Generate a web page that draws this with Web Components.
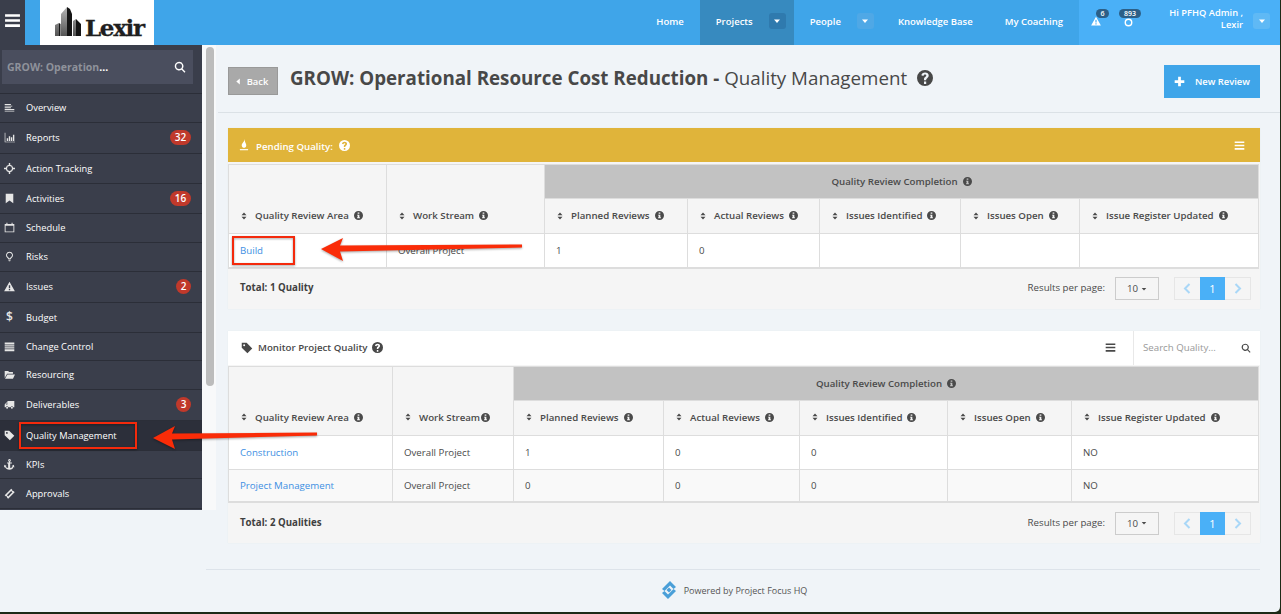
<!DOCTYPE html>
<html>
<head>
<meta charset="utf-8">
<title>Quality Management</title>
<style>
  html, body { margin: 0; height: 100%; overflow: hidden; background: #1d2a17; }
  body { font-family: "Open Sans", "Liberation Sans", sans-serif; font-size: 9.7px; color: #4a4a4a; }
</style>
</head>
<body>
<app-shell>
  <top-bar slot="top"></top-bar>
  <side-bar slot="side"></side-bar>
  <main-area slot="main">
    <page-head></page-head>
    <data-panel kind="pending" heading="Pending Quality:" icon="fire">
      <quality-table widths="158,158,143,132,141,119,179" heights="34,35,34"
        rows='[[{"href":"Build"},"Overall Project","1","0","","",""]]'></quality-table>
      <table-foot slot="foot" total="Total: 1 Quality"></table-foot>
    </data-panel>
    <data-panel kind="monitor" heading="Monitor Project Quality" icon="tag">
      <quality-table tight widths="164,121,150,136,148,124,187" heights="34,35,34,33"
        rows='[[{"href":"Construction"},"Overall Project","1","0","0","","NO"],[{"href":"Project Management"},"Overall Project","0","0","0","","NO"]]'></quality-table>
      <table-foot slot="foot" total="Total: 2 Qualities"></table-foot>
    </data-panel>
    <page-foot></page-foot>
  </main-area>
  <red-mark slot="over" box="19,422,118,27" tip="153,438" back="175,426,175,449" tail="317,434"></red-mark>
  <red-mark slot="over" box="232,236,63,29" tip="321,249" back="343,238,343,261" tail="522,246"></red-mark>
</app-shell>

<script>
const ICONS = {
  bars: '<path d="M1 2h14v2.400H1zM1 6.800h14v2.400H1zM1 11.600h14V14H1z"/>',
  overview: '<path d="M1 3h9v1.300H1zM1 5.400h11v1.300H1zM1 7.800h9v1.300H1zM1 10.200h14v1.300H1zM1 12.600h14v1.300H1z"/>',
  chart: '<path d="M1 1h1v13h14v1H1z"/><path d="M4 9h2v4H4zM7 6h2v7H7zM10 7.500h2V13h-2zM13 4h2v9h-2z"/>',
  target: '<path fill-rule="evenodd" d="M7 0h2v2.700A5.400 5.400 0 0 1 13.300 7H16v2h-2.700A5.400 5.400 0 0 1 9 13.300V16H7v-2.700A5.400 5.400 0 0 1 2.700 9H0V7h2.700A5.400 5.400 0 0 1 7 2.700zM8 4.400a3.600 3.600 0 1 0 0 7.200 3.600 3.600 0 0 0 0-7.200z"/>',
  bookmark: '<path d="M2.500 1h11v14L8 11l-5.500 4z"/>',
  calendar: '<path fill-rule="evenodd" d="M1 3h2.500V1h1.500v2h6V1h1.500v2H15v12H1zM2.300 5.500v8.200h11.400V5.500z"/>',
  bulb: '<path fill-rule="evenodd" d="M8 1a5 5 0 0 1 3 9c-.6.5-.9 1-1 1.700H6c-.1-.7-.4-1.200-1-1.700a5 5 0 0 1 3-9zm0 1.400a3.600 3.600 0 0 0-2.100 6.500c.6.500 1 1 1.200 1.500h1.800c.2-.5.600-1 1.200-1.500A3.600 3.600 0 0 0 8 2.400z"/><path d="M6.300 12.500h3.400v1.200H6.300zM7 14.200h2V15H7z"/>',
  warning: '<path fill-rule="evenodd" d="M8 1l7.800 14H.2zM7 6v4.500h2V6zm0 5.500v2h2v-2z"/>',
  list: '<path d="M1 2h14v3H1zM1 6h14v2H1zM1 9h14v2H1zM1 12h14v3H1z"/>',
  folder: '<path d="M1 3h5l1.500 1.500H13V7H4.500L1 13z"/><path d="M5 8h11l-3 6H1.500z"/>',
  truck: '<path fill-rule="evenodd" d="M5 3h10v9h-1.600a2 2 0 0 0-3.800 0H6.400a2 2 0 0 0-3.800 0H1V8l2.500-3H5zM2.500 8H5V6H4z"/><circle cx="4.500" cy="12.800" r="1.400"/><circle cx="11.500" cy="12.800" r="1.400"/>',
  tag: '<path fill-rule="evenodd" d="M1 1h6.500l7.500 7.500L8.500 15 1 7.500zM4.200 3a1.300 1.300 0 1 0 0 2.600 1.300 1.300 0 0 0 0-2.600z"/>',
  anchor: '<path fill-rule="evenodd" d="M8 0a2 2 0 0 1 1 3.700V5h2.500v1.500H9V13c1.800-.2 3-1 3.500-2L11 10l3.500-1.500.5 4-1.300-.8C13.500 14 11 15.500 8 15.500S2.500 14 1.300 11.700L0 12.500l.5-4L4 10l-1.500 1c.5 1 1.700 1.800 3.500 2V6.500H4.500V5H7V3.700A2 2 0 0 1 8 0zm0 1.300a.7.7 0 1 0 0 1.400.7.7 0 0 0 0-1.400z"/>',
  ticket: '<path fill-rule="evenodd" d="M10.500 1l1.500 1.500a1.600 1.600 0 0 0 2 2L15.500 6 6 15.500 4.500 14a1.600 1.600 0 0 0-2-2L1 10.500zM10.400 4.300L4.300 10.400l1.800 1.800 6.100-6.100z"/>',
  search: '<path fill-rule="evenodd" d="M6.800 1a5.800 5.800 0 0 1 4.600 9.300l3.900 3.900-1.300 1.300-3.900-3.900A5.800 5.800 0 1 1 6.800 1zm0 1.900a3.900 3.900 0 1 0 0 7.800 3.900 3.900 0 0 0 0-7.800z"/>',
  plus: '<path d="M6 1h4v5h5v4h-5v5H6v-5H1V6h5z"/>',
  caret: '<path d="M2 5h12l-6 7z"/>',
  left: '<path d="M11 1v14L3 8z"/>',
  sort: '<path d="M8 1l5 5.500H3zM8 15l-5-5.500h10z"/>',
  info: '<path fill-rule="evenodd" d="M8 0a8 8 0 1 1 0 16A8 8 0 0 1 8 0zM6.500 2.500v2.500h3V2.500zM5.500 6.500V8h1v3h-1v2h5v-2h-1V6.500z"/>',
  help: '<path fill-rule="evenodd" d="M8 0a8 8 0 1 1 0 16A8 8 0 0 1 8 0zM7 11.500V14h2.200v-2.500zM8.100 2.500C6 2.500 4.700 3.600 4.300 5.300l2.100.8c.2-.9.700-1.500 1.600-1.500.7 0 1.300.4 1.300 1 0 .6-.4.900-1.100 1.400C7.400 7.500 7 8.100 7 9.200v1h2.200v-.7c0-.5.300-.8 1-1.300.9-.6 1.500-1.300 1.500-2.600 0-1.900-1.600-3.100-3.600-3.100z"/>',
  fire: '<path d="M8.500 0c.6 2.200-.7 3.300-2 4.900C5.300 6.300 4.800 7.500 5 9c.2 1.600 1.500 2.800 3 2.800s3-1.300 3-3.300c0-2-1.100-3.200-1.500-4.500C9 2.700 9.300 1.200 8.500 0z"/><path d="M2.500 13.500h11V15h-11z"/>',
  globe: '<path fill-rule="evenodd" d="M8 1a7 7 0 1 1 0 14A7 7 0 0 1 8 1zm0 2.500a4.500 4.500 0 1 0 0 9 4.500 4.500 0 0 0 0-9z"/>'
};

class UiIcon extends HTMLElement {
  connectedCallback() {
    const size = this.getAttribute("size") || 12;
    this.attachShadow({ mode: "open" });
    this.shadowRoot.innerHTML = `
    <style>
      :host { display: inline-flex; flex: none; width: ${size}px; height: ${size}px; }
      svg { width: 100%; height: 100%; fill: currentColor; display: block; }
    </style>
    <svg viewBox="0 0 16 16">${ICONS[this.getAttribute("name")] || ""}</svg>`;
  }
}
customElements.define("ui-icon", UiIcon);

class AppShell extends HTMLElement {
  constructor() {
    super();
    this.attachShadow({ mode: "open" });
    this.shadowRoot.innerHTML = `
    <style>
      :host { display: flex; flex-direction: column; position: relative; width: 1280px; height: 612px;
        background: #f0f4f8; overflow: hidden; border-bottom-right-radius: 5px; }
      .body { display: flex; flex: 1; min-height: 0; }
    </style>
    <slot name="top"></slot>
    <div class="body">
      <slot name="side"></slot>
      <slot name="main"></slot>
    </div>
    <slot name="over"></slot>`;
  }
}
customElements.define("app-shell", AppShell);

class TopBar extends HTMLElement {
  constructor() {
    super();
    this.attachShadow({ mode: "open" });
    this.shadowRoot.innerHTML = `
    <style>
      :host { display: flex; height: 45px; background: #3fa5e9; color: #fff; font-size: 9.5px; font-weight: 600; flex: none; }
      .burger { width: 25px; background: #3a3e4b; display: flex; align-items: center; justify-content: center; padding-bottom: 5px; box-sizing: border-box; }
      .logo { width: 114px; margin-left: 15px; background: #fff; display: flex; align-items: flex-end; box-sizing: border-box; padding: 0 0 9px 12px; color: #1f1f1f; }
      .logo svg { width: 32px; height: 32px; display: block; margin-bottom: -1px; filter: blur(.3px); }
      .logo span { font: 700 23px/17px "DejaVu Serif", "Liberation Serif", serif; letter-spacing: -1.3px; -webkit-text-stroke: .3px #1f1f1f; margin-left: 1px; }
      .fill { flex: 1; }
      .item { display: flex; align-items: center; padding: 0 16px 3px; }
      .item.on { background: #378abf; padding-right: 8px; }
      .item.drop { padding-right: 8px; }
      .box { width: 17px; height: 16px; margin-left: 16px; border-radius: 3px; background: #4fa8e6; display: flex; align-items: center; justify-content: center; flex: none; }
      .on .box { background: #2f7aae; }
      .box ui-icon { width: 8px; height: 8px; }
      .right { width: 201px; flex: none; background: #4ab0f7; box-sizing: border-box; padding-left: 12px; display: flex; align-items: flex-start; position: relative; }
      .alert { position: relative; margin-right: 23px; margin-top: 16px; flex: none; }
      .alert.two { margin-top: 17px; margin-right: 25px; }
      .num { position: absolute; top: -7px; left: 5px; min-width: 13px; height: 9px; padding: 0 2px; box-sizing: border-box; border-radius: 6px; background: #2c5f87; font-size: 7px; line-height: 9px; text-align: center; }
      .num.wide { left: -5px; min-width: 22px; top: -8px; }
      .user { width: 85px; flex: none; text-align: right; line-height: 12px; margin-top: 7px; white-space: nowrap; font-size: 9.3px; }
      .right .box { margin: 13px 0 0 10px; background: #5fb9f5; }
    </style>
    <div class="burger"><ui-icon name="bars" size="17"></ui-icon></div>
    <div class="logo">
      <svg viewBox="0 0 32 32">
        <defs><linearGradient id="g" x1="0" y1="0" x2="0" y2="1"><stop offset="0" stop-color="#b5b5b5"/><stop offset="1" stop-color="#555"/></linearGradient></defs>
        <path fill="url(#g)" d="M3 31V20l4-2v13zM9 31V9l6-7v29zM21 31V16l3-2v17z"/>
        <path fill="#151515" d="M7 31V18l1.500 1v12zM15 31V2l3 2 2 5v22zM24 31V14l5 5v12z"/>
      </svg>
      <span>Lexir</span>
    </div>
    <div class="fill"></div>
    <div class="item">Home</div>
    <div class="item on">Projects<div class="box"><ui-icon name="caret"></ui-icon></div></div>
    <div class="item drop">People<div class="box"><ui-icon name="caret"></ui-icon></div></div>
    <div class="item">Knowledge Base</div>
    <div class="item">My Coaching</div>
    <div class="right">
      <div class="alert"><ui-icon name="warning" size="10"></ui-icon><span class="num">6</span></div>
      <div class="alert two"><ui-icon name="globe" size="9"></ui-icon><span class="num wide">893</span></div>
      <div class="user">Hi PFHQ Admin ,<br>Lexir</div>
      <div class="box"><ui-icon name="caret"></ui-icon></div>
    </div>`;
  }
}
customElements.define("top-bar", TopBar);

class NavItem extends HTMLElement {
  connectedCallback() {
    const badge = this.getAttribute("badge");
    const icon = this.getAttribute("icon");
    this.attachShadow({ mode: "open" });
    this.shadowRoot.innerHTML = `
    <style>
      :host { display: flex; align-items: center; height: ${this.getAttribute("h")}px; box-sizing: border-box;
        border-bottom: 1px solid #2b2e38; padding: 0 11px 1px 3px; color: #fff; font-size: 9.3px; }
      :host([active]) { background: #2c2f3a; }
      .ic { width: 13px; margin-right: 10px; display: flex; justify-content: center; color: #e6e6e6; }
      .t { flex: 1; }
      .badge { background: #c0392b; border-radius: 8px; min-width: 15px; height: 15px; padding: 0 3px; box-sizing: border-box;
        font-size: 10px; font-weight: 600; text-align: center; line-height: 15px; }
      .badge.two { width: 21px; }
      .dollar { font-size: 12px; font-weight: 600; line-height: 12px; }
    </style>
    <span class="ic">${icon === "dollar" ? '<span class="dollar">$</span>' : `<ui-icon name="${icon}" size="11"></ui-icon>`}</span>
    <span class="t"><slot></slot></span>
    ${badge ? `<span class="badge ${badge.length > 1 ? "two" : ""}">${badge}</span>` : ""}`;
  }
}
customElements.define("nav-item", NavItem);

class SideBar extends HTMLElement {
  constructor() {
    super();
    this.attachShadow({ mode: "open" });
    const items = [
      ["overview", "Overview", 29], ["chart", "Reports", 31, "32"], ["target", "Action Tracking", 30],
      ["bookmark", "Activities", 30, "16"], ["calendar", "Schedule", 29], ["bulb", "Risks", 29],
      ["warning", "Issues", 31, "2"], ["dollar", "Budget", 30], ["list", "Change Control", 28],
      ["folder", "Resourcing", 29], ["truck", "Deliverables", 31, "3"], ["tag", "Quality Management", 30],
      ["anchor", "KPIs", 28], ["ticket", "Approvals", 30]
    ];
    this.shadowRoot.innerHTML = `
    <style>
      :host { display: flex; width: 216px; height: 465px; flex: none; background: #f8f9fa; }
      .menu { width: 202px; background: #3a3e4b; display: flex; flex-direction: column; overflow: hidden; }
      .top { height: 49px; flex: none; box-sizing: border-box; padding: 5px 9px 9px 2px; border-bottom: 1px solid #2b2e38; }
      .search { height: 34px; background: #4a4e5e; display: flex; align-items: center; justify-content: space-between;
        padding: 0 7px 0 5px; font-weight: 700; font-size: 10.5px; color: #8f929b; }
      .search b { color: #fff; font-weight: 700; }
      .search ui-icon { color: #fff; }
      .bar { width: 14px; padding: 2px 2px 0 4px; box-sizing: border-box; }
      .thumb { height: 339px; background: #bcbcbc; border-radius: 4px; }
    </style>
    <div class="menu">
      <div class="top"><div class="search"><span>GROW: Operation<b>...</b></span><ui-icon name="search" size="12"></ui-icon></div></div>
      ${items.map(i => `<nav-item icon="${i[0]}" h="${i[2]}" ${i[3] ? `badge="${i[3]}"` : ""} ${i[1] === "Quality Management" ? "active" : ""}>${i[1]}</nav-item>`).join("")}
    </div>
    <div class="bar"><div class="thumb"></div></div>`;
  }
}
customElements.define("side-bar", SideBar);

class MainArea extends HTMLElement {
  constructor() {
    super();
    this.attachShadow({ mode: "open" });
    this.shadowRoot.innerHTML = `
    <style>
      :host { display: flex; flex-direction: column; flex: 1; min-width: 0; }
    </style>
    <slot></slot>`;
  }
}
customElements.define("main-area", MainArea);

class PageHead extends HTMLElement {
  constructor() {
    super();
    this.attachShadow({ mode: "open" });
    this.shadowRoot.innerHTML = `
    <style>
      :host { display: flex; height: 68px; box-sizing: border-box; border-bottom: 1px solid #dbe1e6; margin-left: 2px;
        padding: 20px 20px 0 10px; align-items: flex-start; }
      .back { width: 50px; height: 28px; margin-top: 2px; box-sizing: border-box; background: #a9a9a9; border: 1px solid #999; color: #fff;
        display: flex; align-items: center; justify-content: center; gap: 5px; padding-right: 3px; font-weight: 600; font-size: 9.4px; }
      .back ui-icon { width: 7px; height: 7px; }
      h1 { margin: 0 0 0 12px; font-size: 18.75px; line-height: 26px; font-weight: 400; color: #484848; flex: 1; display: flex; align-items: center; white-space: pre; }
      h1 b { font-weight: 700; }
      h1 ui-icon { margin-left: 10px; }
      .new { width: 96px; height: 33px; background: #3fa5e9; color: #fff; display: flex; align-items: center; gap: 10px; padding-left: 10px; box-sizing: border-box; font-weight: 600; font-size: 9.4px; }
    </style>
    <div class="back"><ui-icon name="left"></ui-icon>Back</div>
    <h1><b>GROW: Operational Resource Cost Reduction - </b>Quality Management<ui-icon name="help" size="16"></ui-icon></h1>
    <div class="new"><ui-icon name="plus" size="11"></ui-icon>New Review</div>`;
  }
}
customElements.define("page-head", PageHead);

class DataPanel extends HTMLElement {
  connectedCallback() {
    const pending = this.getAttribute("kind") === "pending";
    this.attachShadow({ mode: "open" });
    this.shadowRoot.innerHTML = `
    <style>
      :host { display: block; margin: 0 20px 0 12px; background: #f5f5f5; box-shadow: 0 0 1px #dfe3e6; }
      :host([kind=pending]) { margin-top: 15px; margin-bottom: 22px; }
      .head { display: flex; align-items: center; height: 34px; box-sizing: border-box; padding-left: ${pending ? 10 : 13}px; font-weight: 600;
        background: ${pending ? "#e0b43a" : "#fff"}; color: ${pending ? "#fff" : "#484848"}; gap: ${pending ? 6 : 5}px; }
      .t { padding-top: ${pending ? 2 : 0}px; }
      .fill { flex: 1; }
      .menu { margin-right: ${pending ? 15 : 12}px; }
      .find { width: 127px; align-self: stretch; border-left: 1px solid #e8e8e8; display: flex; align-items: center; justify-content: space-between;
        padding: 0 9px; box-sizing: border-box; color: #999; font-weight: 400; }
      .find ui-icon { color: #484848; }
      .wrap { padding: ${pending ? "2px" : "1px"} 2px 0 0; }
    </style>
    <div class="head">
      <ui-icon name="${this.getAttribute("icon")}" size="12"></ui-icon>
      <span class="t">${this.getAttribute("heading")}</span>
      <ui-icon name="help" size="11"></ui-icon>
      <span class="fill"></span>
      <ui-icon class="menu" name="bars" size="11"></ui-icon>
      ${pending ? "" : '<div class="find">Search Quality...<ui-icon name="search" size="10"></ui-icon></div>'}
    </div>
    <div class="wrap"><slot></slot></div>
    <slot name="foot"></slot>`;
  }
}
customElements.define("data-panel", DataPanel);

class QualityTable extends HTMLElement {
  connectedCallback() {
    const widths = this.getAttribute("widths").split(",");
    const h = this.getAttribute("heights").split(",");
    const rows = JSON.parse(this.getAttribute("rows"));
    const labels = ["Planned Reviews", "Actual Reviews", "Issues Identified", "Issues Open", "Issue Register Updated"];
    const th = (t, extra, tight) => `<th ${extra || ""}><span class="c"><ui-icon class="s" name="sort" size="8"></ui-icon>${t}<ui-icon class="i ${tight ? "tight" : ""}" name="info" size="9"></ui-icon></span></th>`;
    const cell = c => c.href ? `<td><a>${c.href}</a></td>` : `<td>${c}</td>`;
    const low = `rowspan="2" style="padding-top:${h[0]}px"`;
    this.attachShadow({ mode: "open" });
    this.shadowRoot.innerHTML = `
    <style>
      :host { display: block; }
      table { border-collapse: collapse; table-layout: fixed; width: 1030px; background: #fff; font-size: 9.7px; color: #4a4a4a; }
      th, td { border: 1px solid #ddd; padding: 0 0 0 11px; text-align: left; box-sizing: border-box; }
      th { background: #f5f5f5; font-weight: 600; vertical-align: middle; }
      th.group { background: #c2c2c2; text-align: center; padding: 0; }
      tr:nth-child(even) td { background: #f9f9f9; }
      tbody tr:last-child td { border-bottom: 2px solid #ddd; }
      a { color: #3d8fe3; }
      .c { display: inline-flex; align-items: center; white-space: nowrap; }
      .s { margin-right: 7px; }
      .i { margin-left: 5px; }
      .i.tight { margin-left: 1px; }
    </style>
    <table>
      <colgroup>${widths.map(w => `<col style="width:${w}px">`).join("")}</colgroup>
      <thead>
        <tr style="height:${h[0]}px">
          ${th("Quality Review Area", low)}
          ${th("Work Stream", low, this.hasAttribute("tight"))}
          <th colspan="5" class="group"><span class="c">Quality Review Completion<ui-icon class="i" name="info" size="9"></ui-icon></span></th>
        </tr>
        <tr style="height:${h[1]}px">${labels.map(l => th(l)).join("")}</tr>
      </thead>
      <tbody>
        ${rows.map((r, n) => `<tr style="height:${h[2 + n]}px">${r.map(cell).join("")}</tr>`).join("")}
      </tbody>
    </table>`;
  }
}
customElements.define("quality-table", QualityTable);

class TableFoot extends HTMLElement {
  connectedCallback() {
    this.attachShadow({ mode: "open" });
    this.shadowRoot.innerHTML = `
    <style>
      :host { display: flex; align-items: center; height: 40px; box-sizing: border-box; padding: 0 9px 0 12px; font-size: 9.7px; }
      b { font-weight: 700; color: #3f3f3f; flex: 1; margin-bottom: 2px; }
      .rp { margin-bottom: 2px; }
      .sel { width: 44px; height: 23px; margin: 0 15px 0 10px; box-sizing: border-box; border: 1px solid #ccc; display: flex; align-items: center; justify-content: center; gap: 3px; }
      .sel ui-icon { width: 6px; height: 6px; }
      .pg { display: flex; width: 77px; height: 23px; box-shadow: inset 0 0 0 1px #e6e6e6; font-size: 11px; }
      .pg span { flex: 1; display: flex; align-items: center; justify-content: center; color: #a9d7f7; font-weight: 700; }
      .pg .on { background: #4ab0f7; color: #fff; font-weight: 400; }
      .pg svg { width: 8px; height: 11px; fill: none; stroke: currentColor; stroke-width: 2; }
    </style>
    <b>${this.getAttribute("total")}</b>
    <span class="rp">Results per page:</span>
    <div class="sel">10<ui-icon name="caret"></ui-icon></div>
    <div class="pg">
      <span><svg viewBox="0 0 8 11"><path d="M6.500 1L2 5.500 6.500 10"/></svg></span>
      <span class="on">1</span>
      <span><svg viewBox="0 0 8 11"><path d="M1.500 1L6 5.500 1.500 10"/></svg></span>
    </div>`;
  }
}
customElements.define("table-foot", TableFoot);

class PageFoot extends HTMLElement {
  constructor() {
    super();
    this.attachShadow({ mode: "open" });
    this.shadowRoot.innerHTML = `
    <style>
      :host { display: flex; align-items: center; justify-content: center; gap: 5px; margin: 26px 20px 0 -10px; height: 40px;
        border-top: 1px solid #dde3ea; color: #555; font-size: 9px; }
      svg { width: 20px; height: 20px; }
    </style>
    <svg viewBox="0 0 20 20"><path fill="#4a9fd8" d="M3 9L11 1l6 6-2.500 2L11 5.500 5.500 11zM17 11l-8 8-6-6 2.500-2L9 14.500 14.500 9zM10 7.500l2.500 2.500-2.500 2.500L7.500 10z"/></svg>
    <span>Powered by Project Focus HQ</span>`;
  }
}
customElements.define("page-foot", PageFoot);

// red annotations drawn on top of the screenshot
class RedMark extends HTMLElement {
  connectedCallback() {
    const b = this.getAttribute("box").split(",").map(Number);
    const tip = this.getAttribute("tip").split(",").map(Number);
    const back = this.getAttribute("back").split(",").map(Number);
    const tail = this.getAttribute("tail").split(",").map(Number);
    const midY = (back[1] + back[3]) / 2 - 1;
    this.attachShadow({ mode: "open" });
    this.shadowRoot.innerHTML = `
    <style>
      :host { display: block; position: absolute; left: 0; top: 0; width: 0; height: 0; }
      svg { position: absolute; left: 0; top: 0; overflow: visible; filter: drop-shadow(0 1px 1px rgba(0,0,0,.35)); }
    </style>
    <svg width="1281" height="614">
      <rect x="${b[0] + 1}" y="${b[1] + 1}" width="${b[2] - 2}" height="${b[3] - 2}" fill="none" stroke="#f42a0c" stroke-width="2"/>
      <path fill="#fa2c08" d="M${tip[0]} ${tip[1]}L${back[0]} ${back[1]}L${back[0] - 3} ${midY - 3}L${tail[0]} ${tail[1] - 1.5}L${tail[0]} ${tail[1] + 1.5}L${back[0] - 3} ${midY + 3}L${back[2]} ${back[3]}Z"/>
    </svg>`;
  }
}
customElements.define("red-mark", RedMark);
</script>
</body>
</html>
